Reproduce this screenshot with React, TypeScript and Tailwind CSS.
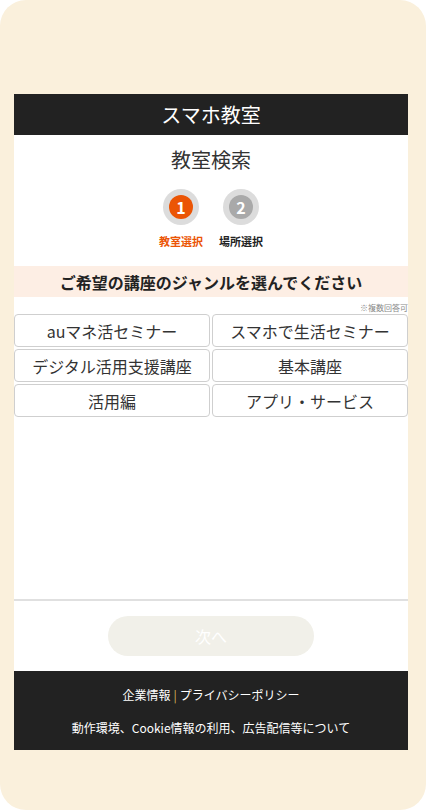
import React from "react";

const genres = [
  "auマネ活セミナー",
  "スマホで生活セミナー",
  "デジタル活用支援講座",
  "基本講座",
  "活用編",
  "アプリ・サービス",
];

const Step: React.FC<{ num: number; label: string; active?: boolean }> = ({
  num,
  label,
  active,
}) => (
  <div className="flex flex-col items-center w-[60px]">
    <div className="w-[36px] h-[36px] rounded-full bg-[#dcdcdc] flex items-center justify-center">
      <div
        className={
          active
            ? "w-[24px] h-[24px] rounded-full bg-[#eb5505] text-white flex items-center justify-center text-[16px] font-bold leading-none"
            : "w-[24px] h-[24px] rounded-full bg-[#a9a9a9] text-white flex items-center justify-center text-[16px] font-bold leading-none"
        }
      >
        {num}
      </div>
    </div>
    <p
      className={
        active
          ? "mt-[9px] text-[11px] font-bold leading-[14px] text-[#eb5505]"
          : "mt-[9px] text-[11px] font-bold leading-[14px] text-[#222]"
      }
    >
      {label}
    </p>
  </div>
);

const App = () => {
  const [selected, setSelected] = React.useState<string[]>([]);

  const toggle = (g: string) =>
    setSelected((prev) =>
      prev.includes(g) ? prev.filter((x) => x !== g) : [...prev, g]
    );

  return (
    <div className="bg-white w-[426px] h-[810px] font-['Noto_Sans_CJK_JP','Noto_Sans',sans-serif]">
      <div className="w-[426px] h-[810px] bg-[#faf0dc] rounded-[26px] pt-[94px] pl-[14px] pr-[18px]">
        <div className="bg-white h-[656px] flex flex-col">
          <header className="h-[41px] bg-[#222] text-white text-[20px] flex items-center justify-center">
            スマホ教室
          </header>

          <h1 className="mt-[12px] text-center text-[20px] leading-[26px] text-[#333]">
            教室検索
          </h1>

          <div className="mt-[16px] flex justify-center">
            <Step num={1} label="教室選択" active />
            <Step num={2} label="場所選択" />
          </div>

          <div className="mt-[18px] h-[31px] bg-[#fdeee4] flex items-center justify-center text-[16px] font-bold text-[#222]">
            ご希望の講座のジャンルを選んでください
          </div>

          <p className="mt-[6px] text-right text-[8px] leading-[10px] text-[#888]">
            ※複数回答可
          </p>

          <div className="mt-[1px] grid grid-cols-2 gap-[2px]">
            {genres.map((g) => (
              <button
                key={g}
                onClick={() => toggle(g)}
                className={
                  selected.includes(g)
                    ? "h-[33px] border border-[#eb5505] rounded-[4px] text-[16px] text-[#333] bg-[#fdeee4]"
                    : "h-[33px] border border-[#cfcfcf] rounded-[4px] text-[16px] text-[#333] bg-white"
                }
              >
                {g}
              </button>
            ))}
          </div>

          <div className="flex-1" />

          <div className="border-t-2 border-[#e0e0e0] pt-[15px] pb-[15px] flex justify-center">
            <button
              disabled={selected.length === 0}
              className="w-[206px] h-[40px] rounded-full bg-[#f1f0e9] text-white text-[16px] disabled:cursor-default"
            >
              次へ
            </button>
          </div>

          <footer className="h-[79px] bg-[#222] text-white text-[12px] flex flex-col items-center pt-[14px]">
            <p className="leading-[20px]">
              企業情報<span className="text-[#d9b75a] mx-[3px]">|</span>プライバシーポリシー
            </p>
            <p className="mt-[13px] leading-[20px]">
              動作環境、Cookie情報の利用、広告配信等について
            </p>
          </footer>
        </div>
      </div>
    </div>
  );
};

export default App;
